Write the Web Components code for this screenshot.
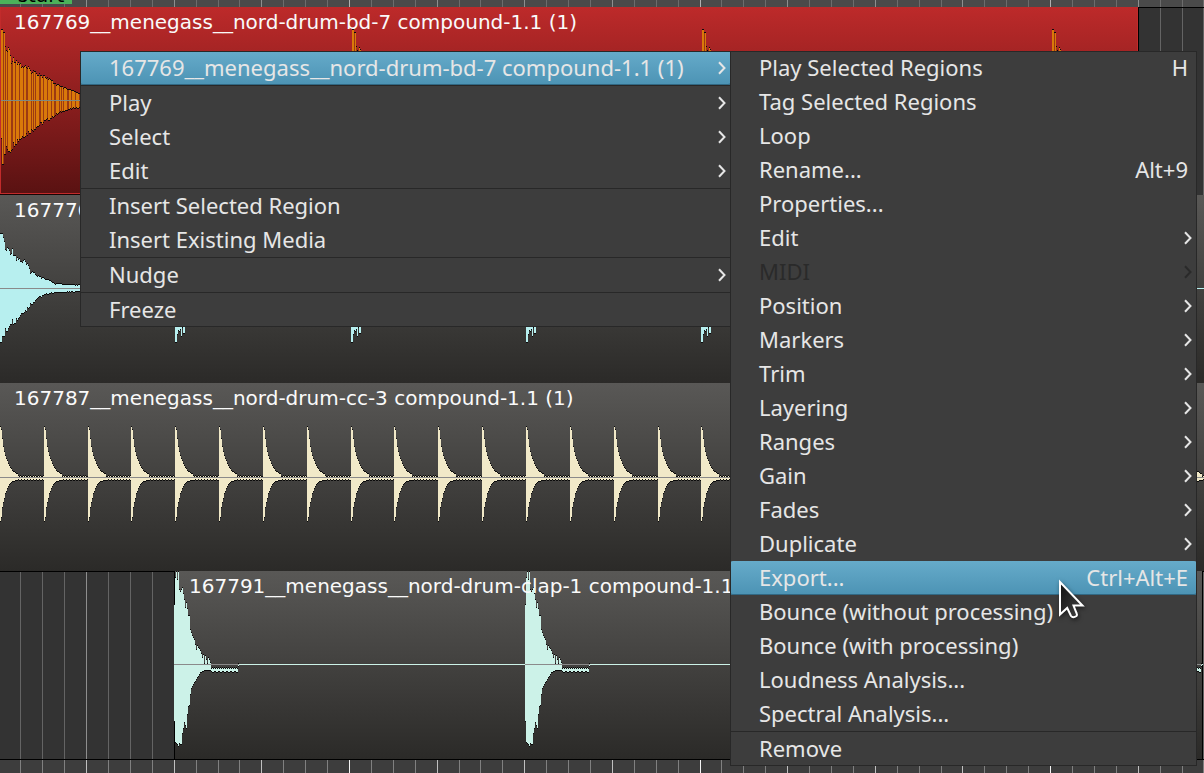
<!DOCTYPE html>
<html lang="en">
<head>
<meta charset="utf-8">
<title>Session editor</title>
<style>
  html, body { margin: 0; }
  body { background: #333; }
</style>
</head>
<body>
<editor-canvas>
  <time-ruler slot="top" edge="top"><span>start</span></time-ruler>
  <audio-track>
    <audio-region style="--length: 1138px" tone="selected" wave="kick" name="167769__menegass__nord-drum-bd-7 compound-1.1 (1)"></audio-region>
  </audio-track>
  <audio-track>
    <audio-region wave="snare" name="167776"></audio-region>
  </audio-track>
  <audio-track>
    <audio-region wave="hat" name="167787__menegass__nord-drum-cc-3 compound-1.1 (1)"></audio-region>
  </audio-track>
  <audio-track style="--start: 174px; --end: 1px">
    <audio-region wave="clap" name="167791__menegass__nord-drum-clap-1 compound-1.1 (1)"></audio-region>
  </audio-track>
  <time-ruler slot="bottom" edge="bottom"></time-ruler>

  <context-menu slot="overlay" label="Region context" style="--x: 80px; --w: 651px">
    <menu-entry submenu active>167769__menegass__nord-drum-bd-7 compound-1.1 (1)</menu-entry>
    <menu-rule></menu-rule>
    <menu-entry submenu>Play</menu-entry>
    <menu-entry submenu>Select</menu-entry>
    <menu-entry submenu>Edit</menu-entry>
    <menu-rule></menu-rule>
    <menu-entry>Insert Selected Region</menu-entry>
    <menu-entry>Insert Existing Media</menu-entry>
    <menu-rule></menu-rule>
    <menu-entry submenu>Nudge</menu-entry>
    <menu-rule></menu-rule>
    <menu-entry>Freeze</menu-entry>
  </context-menu>

  <context-menu slot="overlay" label="Region" style="--x: 730px; --w: 467px">
    <menu-entry keys="H">Play Selected Regions</menu-entry>
    <menu-entry>Tag Selected Regions</menu-entry>
    <menu-entry>Loop</menu-entry>
    <menu-entry keys="Alt+9">Rename...</menu-entry>
    <menu-entry>Properties...</menu-entry>
    <menu-entry submenu>Edit</menu-entry>
    <menu-entry submenu disabled>MIDI</menu-entry>
    <menu-entry submenu>Position</menu-entry>
    <menu-entry submenu>Markers</menu-entry>
    <menu-entry submenu>Trim</menu-entry>
    <menu-entry submenu>Layering</menu-entry>
    <menu-entry submenu>Ranges</menu-entry>
    <menu-entry submenu>Gain</menu-entry>
    <menu-entry submenu>Fades</menu-entry>
    <menu-entry submenu>Duplicate</menu-entry>
    <menu-entry active keys="Ctrl+Alt+E">Export...</menu-entry>
    <menu-entry>Bounce (without processing)</menu-entry>
    <menu-entry>Bounce (with processing)</menu-entry>
    <menu-entry>Loudness Analysis...</menu-entry>
    <menu-entry>Spectral Analysis...</menu-entry>
    <menu-rule></menu-rule>
    <menu-entry>Remove</menu-entry>
  </context-menu>

  <mouse-pointer slot="overlay"></mouse-pointer>
</editor-canvas>

<script>
const define = (name, html, setup) => {
  const template = document.createElement('template');
  template.innerHTML = html;
  customElements.define(name, class extends HTMLElement {
    connectedCallback() {
      if (this.shadowRoot) return;
      const root = this.attachShadow({ mode: 'open' });
      root.append(template.content.cloneNode(true));
      if (setup) setup(this, root);
    }
  });
};

// Vertical lines of the tempo grid; every fourth one is a beat.
const gridLines = (minor, beat, bar) => {
  let out = '';
  for (let k = 1; k < 180; k++) {
    const color = k % 16 === 0 ? bar : k % 4 === 0 ? beat : minor;
    out += `<rect x="${Math.round(21.91 * k - 1.6)}" y="0" width="1" height="100%" fill="${color}"/>`;
  }
  return out;
};

define('editor-canvas', `
  <style>
    :host { display: flex; flex-direction: column; position: relative; min-height: 100vh; overflow: hidden; }
    main { display: block; }
    .foot { display: flex; flex: 1; }
  </style>
  <slot name="top"></slot>
  <main><slot></slot></main>
  <div class="foot"><slot name="bottom"></slot></div>
  <slot name="overlay"></slot>`);

define('time-ruler', `
  <style>
    :host { display: block; position: relative; height: 7px; overflow: hidden; background: #4a4a4a; }
    :host([edge="bottom"]) { flex: 1; height: auto; min-height: 13px; background: #3d3d3d; border-top: 1px solid #000; }
    svg { display: block; width: 100%; height: 100%; position: absolute; }
    .marker { position: absolute; left: 0; top: -17px; width: 72px; height: 21px; background: #4cb25a;
      color: #000; font: 20px/24px "DejaVu Sans", sans-serif; text-align: center; box-sizing: border-box; padding-left: 10px; }
    :host([edge="bottom"]) .marker { display: none; }
  </style>
  <svg aria-hidden="true"></svg>
  <div class="marker"><slot></slot></div>`,
  (el, root) => {
    root.querySelector('svg').innerHTML = el.getAttribute('edge') === 'top'
      ? gridLines('#6c6c6c', '#8e8e8e', '#b0b0b0') : gridLines('#808080', '#c0c0c0', '#f4f4f4');
  });

define('audio-track', `
  <style>
    :host { display: grid; height: 188px; background: #333; overflow: hidden; }
    svg, .lane { grid-area: 1 / 1; min-width: 0; width: 100%; height: 100%; box-sizing: border-box; }
    .lane { display: flex; position: relative; padding: 0 var(--end, 0) 0 var(--start, 0); box-shadow: inset 0 1px #000; }
  </style>
  <svg aria-hidden="true"></svg>
  <div class="lane"><slot></slot></div>`,
  (el, root) => { root.querySelector('svg').innerHTML = gridLines('#646464', '#8e8e8e', '#8e8e8e'); });

// Interpolates a peak curve given as [column, height] pairs.
const curve = (points, x) => {
  for (let i = 1; i < points.length; i++) {
    const [x0, y0] = points[i - 1], [x1, y1] = points[i];
    if (x <= x1) return y0 + (y1 - y0) * (x - x0) / (x1 - x0);
  }
  return points[points.length - 1][1];
};
// Repeatable jitter that thins each peak by up to the given share of its height.
const jitter = (x, height, share) => {
  const s = Math.sin(x * 12.9898) * 43758.5453;
  return height * share * (s - Math.floor(s));
};

const waves = {
  kick: {
    axis: 93, fill: '#d9790a', line: '#7e8a84', hits: [1, 352, 702, 1052], length: 150, rough: 0.16,
    top: [[0, 70], [1, 70], [2, 67], [3, 67], [4, 53], [8, 53], [10, 43], [13, 44], [20, 37], [30, 31], [40, 27], [50, 20], [60, 13], [70, 10], [80, 5], [149, 1]],
    bottom: [[0, 38], [1, 64], [2, 64], [3, 54], [9, 53], [14, 45], [21, 39], [30, 33], [40, 25], [50, 19], [60, 12], [75, 8], [149, 1]],
    gaps: '#9c3a12'
  },
  snare: {
    axis: 93, fill: '#b7efef', line: '#8a8a8a', hits: [0, 175, 351, 526, 701, 877, 1052], length: 100, baseline: true, rough: 0.2,
    top: [[0, 54], [2, 54], [3, 50], [5, 42], [10, 41], [13, 40], [16, 33], [22, 29], [24, 29], [28, 23], [30, 18], [40, 12], [50, 7], [55, 4], [70, 3], [99, 2]],
    bottom: [[0, 54], [1, 54], [2, 48], [6, 48], [10, 37], [14, 36], [18, 33], [22, 26], [26, 24], [30, 18], [38, 10], [50, 5], [70, 4], [99, 2]],
    repeatBottom: [54, 54, 46, 42, 43, 41, 48, 39, 45, 45, 36, 34, 32]
  },
  hat: {
    axis: 94, fill: '#f1e9c8', line: '#8a8a8a', every: 43.85, hits: [], length: 44, rough: 0,
    top: [[0, 50], [1, 47], [2, 38], [3, 30], [4, 25], [5, 21], [6, 18], [8, 13], [10, 9], [12, 6], [15, 4], [18, 2], [43, 1]],
    bottom: [[0, 44], [1, 40], [2, 30], [3, 25], [4, 21], [5, 16], [7, 11], [9, 7], [12, 4], [16, 3], [43, 2]]
  },
  clap: {
    axis: 93, fill: '#ccf2e8', line: '#8a8a8a', hits: [0, 351, 963], length: 65, baseline: true, rough: 0,
    top: [[0, 59], [1, 86], [2, 92], [3, 84], [4, 92], [5, 74], [6, 72], [8, 76], [9, 70], [10, 64], [11, 56], [12, 61], [14, 48], [15, 48], [16, 34], [18, 28], [20, 24], [22, 14], [23, 18], [26, 13], [28, 6], [29, 9], [30, 0], [31, 8], [33, 0], [34, 6], [36, 1], [37, -3], [63, -3], [64, 0]],
    bottom: [[0, 57], [1, 78], [3, 80], [4, 82], [5, 79], [7, 80], [8, 69], [10, 58], [12, 64], [13, 50], [14, 42], [15, 41], [16, 30], [17, 24], [20, 18], [22, 15], [26, 8], [30, 6], [36, 6], [50, 7], [63, 7], [64, 2]]
  }
};

const drawWave = (wave, width) => {
  const hits = wave.every ? Array.from({ length: Math.ceil(width / wave.every) }, (_, i) => Math.floor(i * wave.every + 0.3)) : wave.hits;
  let body = '', edge = '', gaps = '';
  hits.forEach((start, n) => {
    for (let i = 0; i < wave.length; i++) {
      const x = start + i;
      if (x >= width) break;
      let up = curve(wave.top, i), down = curve(wave.bottom, i);
      if (i > 4) {
        up -= jitter(i, up, wave.rough);
        down -= jitter(i + 50, down, wave.rough);
      }
      up = Math.round(up);
      down = Math.round(down);
      if (wave === waves.hat && i > 17) { up = (x * 7) % 5 < 2 ? 1 : 0; down = (x * 5) % 3 ? 3 : 2; }
      if (wave === waves.clap && i > 36 && i < 64) { up = -4 - i % 2; down = 7 + (i >> 1) % 2; }
      if (n && wave.repeatBottom) down = i < wave.repeatBottom.length ? wave.repeatBottom[i] : Math.min(down, 30);
      const seg = `M${x} ${wave.axis - up}h1v${up + down}h-1z`;
      if (wave.gaps && i > 1 && (i % 4 === 2 || i % 7 === 4)) gaps += seg; else body += seg;
      edge += `M${x} ${wave.axis - up - 1}h1v1h-1zM${x} ${wave.axis + down}h1v1h-1z`;
    }
  });
  const base = wave.baseline ? `<rect x="0" y="${wave.axis}" width="100%" height="1" fill="${wave.fill}"/>` : '';
  const axis = wave.baseline
    ? hits.map(h => `<rect x="${h}" y="${wave.axis}" width="${wave.length}" height="1" fill="${wave.line}"/>`).join('')
    : `<rect x="0" y="${wave.axis}" width="100%" height="1" fill="${wave.line}"/>`;
  return `${base}<path d="${edge}" fill="#0b0b0b"/><path d="${body}" fill="${wave.fill}"/><path d="${gaps}" fill="${wave.gaps || 'none'}"/>${axis}`;
};

define('audio-region', `
  <style>
    :host { display: grid; flex: 1; min-width: 0; box-sizing: border-box; overflow: hidden;
      background: linear-gradient(#595856, #2b2a28); }
    :host([tone="selected"]) { flex: 0 0 var(--length); background: linear-gradient(#bd2a2a, #5a1212);
      border: 1px solid #c22b2b; border-width: 0 1px 1px; margin-bottom: 1px; box-shadow: 1px 0 #000, 0 1px #1a0505; }
    :host([wave="clap"]) { box-shadow: inset 1px 0 #000, inset -1px 0 #000; }
    svg, .name { grid-area: 1 / 1; width: 100%; height: 100%; min-width: 0; }
    :host([tone="selected"]) svg { margin-left: -1px; }
    .name { box-sizing: border-box; padding: 3px 14px; color: #fafafa; white-space: nowrap; position: relative;
      font: 20px/24px "DejaVu Sans", sans-serif; }
    :host([tone="selected"]) .name { padding-left: 13px; }
    :host([wave="clap"]) .name { padding-left: 15px; }
  </style>
  <svg shape-rendering="crispEdges" aria-hidden="true"></svg>
  <div class="name"></div>`,
  (el, root) => {
    root.querySelector('svg').innerHTML = drawWave(waves[el.getAttribute('wave')], 1204);
    root.querySelector('.name').textContent = el.getAttribute('name');
  });

define('context-menu', `
  <style>
    :host { position: absolute; top: 51px; left: var(--x); width: var(--w); display: block; background: #3d3d3d; color: #e6e6e6;
      font: 22px/32px "Noto Sans", sans-serif; }
    :host::after { content: ""; position: absolute; inset: 0; border: 1px solid #282828; pointer-events: none; }
    div { display: flex; flex-direction: column; }
  </style>
  <div role="menu"><slot></slot></div>`,
  (el, root) => root.querySelector('div').setAttribute('aria-label', el.getAttribute('label')));

define('menu-rule', `
  <style>:host { display: block; height: 1px; background: #282828; }</style>`,
  el => el.setAttribute('role', 'separator'));

define('menu-entry', `
  <style>
    :host { display: block; }
    button { display: flex; align-items: center; justify-content: space-between; width: 100%; height: 34px; margin: 0; border: 0;
      padding: 0 9px 0 29px; background: none; color: inherit; font: inherit; text-align: left; white-space: nowrap; }
    span { padding-bottom: 2px; }
    :host([submenu]) button { padding-right: 5px; }
    :host([active]) button { background: linear-gradient(#66abca, #4c93b4); box-shadow: inset 0 -1px #316883; border-radius: 3px; }
    button:disabled { color: #2a2a2a; }
    svg { display: none; width: 8px; height: 14px; fill: none; stroke: currentColor; stroke-width: 2; }
    :host([submenu]) svg { display: block; }
  </style>
  <button type="button" role="menuitem"><span><slot></slot></span><span class="keys"></span>
    <svg viewBox="0 0 8 14" aria-hidden="true"><path d="M1 1.2L6.5 7L1 12.8"/></svg></button>`,
  (el, root) => {
    root.querySelector('button').disabled = el.hasAttribute('disabled');
    const keys = root.querySelector('.keys');
    if (el.hasAttribute('keys')) keys.textContent = el.getAttribute('keys'); else keys.remove();
  });

define('mouse-pointer', `
  <style>
    :host { position: absolute; left: 1058px; top: 578px; display: block; pointer-events: none; }
    svg { display: block; filter: drop-shadow(1px 2px 2px rgba(0, 0, 0, .5)); }
  </style>
  <svg width="30" height="44" viewBox="0 0 30 44" aria-hidden="true">
    <defs><linearGradient id="g" x1="0" y1="0" x2="1" y2="1"><stop offset="0" stop-color="#111"/><stop offset="1" stop-color="#444"/></linearGradient></defs>
    <path d="M2 4V36.500L9.200 30L13 38Q15 40.500 18.500 38Q19.500 37 18.500 35L15.500 27.500H24.500Z" fill="url(#g)" stroke="#fff" stroke-width="2" stroke-linejoin="miter"/>
  </svg>`);
</script>
</body>
</html>
